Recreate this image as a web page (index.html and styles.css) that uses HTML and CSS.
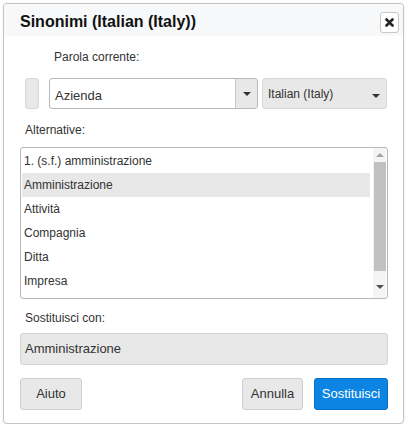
FILE: index.html
```html
<!DOCTYPE html>
<html>
<head>
<meta charset="utf-8">
<link rel="stylesheet" href="styles.css">
</head>
<body>
<div class="dialog">
  <div class="header">
    <div class="title">Sinonimi (Italian (Italy))</div>
    <div class="close">
      <svg width="9" height="9" viewBox="0 0 9 9"><path d="M1.5 1.5 L7.5 7.5 M7.5 1.5 L1.5 7.5" stroke="#222" stroke-width="2.6" stroke-linecap="round"/></svg>
    </div>
  </div>
  <div class="content">
    <div class="label label-word">Parola corrente:</div>
    <div class="word-row">
      <div class="small-btn"></div>
      <div class="combo">
        <div class="combo-text">Azienda</div>
        <div class="combo-drop"><span class="caret"></span></div>
      </div>
      <div class="select">
        <span class="select-text">Italian (Italy)</span>
        <span class="caret"></span>
      </div>
    </div>
    <div class="label label-alt">Alternative:</div>
    <div class="listbox">
      <div class="items">
        <div class="item">1. (s.f.) amministrazione</div>
        <div class="item selected">Amministrazione</div>
        <div class="item">Attività</div>
        <div class="item">Compagnia</div>
        <div class="item">Ditta</div>
        <div class="item">Impresa</div>
      </div>
      <div class="scrollbar">
        <span class="arrow-up"></span>
        <div class="thumb"></div>
        <span class="arrow-down"></span>
      </div>
    </div>
    <div class="label label-rep">Sostituisci con:</div>
    <div class="replace">Amministrazione</div>
    <div class="buttons">
      <div class="btn btn-help">Aiuto</div>
      <div class="spacer"></div>
      <div class="btn btn-cancel">Annulla</div>
      <div class="btn btn-primary">Sostituisci</div>
    </div>
  </div>
</div>
</body>
</html>
```
FILE: styles.css
```css
html, body {
  margin: 0;
  padding: 0;
  background: #ffffff;
}
body {
  font-family: "Liberation Sans", Arial, sans-serif;
  color: #333;
}
.dialog {
  position: relative;
  margin: 3px 0 0 3px;
  width: 399px;
  height: 419px;
  border: 1px solid #c4c4c4;
  border-radius: 4px;
  background: #fff;
  box-shadow: 0 0 2px rgba(0,0,0,0.12);
  overflow: hidden;
}
.header {
  height: 32px;
  background: #f6f8fa;
  display: flex;
  align-items: center;
  padding: 0 4px 0 16px;
}
.title {
  flex: 1;
  font-size: 16px;
  font-weight: bold;
  color: #111;
  margin-top: 3px;
}
.close {
  width: 17px;
  height: 19px;
  border: 1px solid #c8c8c8;
  border-radius: 3px;
  background: #fff;
  display: flex;
  align-items: center;
  justify-content: center;
  margin-top: 5px;
}
.content {
  padding: 0 15px 0 16px;
}
.label {
  font-size: 12px;
  line-height: 14px;
}
.label-word {
  margin: 14px 0 0 34px;
}
.word-row {
  display: flex;
  margin-top: 14px;
  height: 31px;
}
.small-btn {
  width: 12px;
  height: 29px;
  margin-left: 5px;
  background: #e8e8e8;
  border: 1px solid #d6d6d6;
  border-radius: 3px;
}
.combo {
  margin-left: 10px;
  width: 207px;
  height: 29px;
  border: 1px solid #b8b8b8;
  border-radius: 3px;
  display: flex;
  overflow: hidden;
  background: #fff;
}
.combo-text {
  flex: 1;
  font-size: 13px;
  line-height: 29px;
  padding-left: 5px;
  margin-top: 2px;
}
.combo-drop {
  width: 21px;
  background: #e8e8e8;
  border-left: 1px solid #c8c8c8;
  display: flex;
  align-items: center;
  justify-content: center;
}
.caret {
  display: inline-block;
  width: 0;
  height: 0;
  border-left: 4px solid transparent;
  border-right: 4px solid transparent;
  border-top: 4px solid #333;
}
.select {
  margin-left: 4px;
  height: 29px;
  background: #e8e8e8;
  border: 1px solid #d8d8d8;
  border-radius: 3px;
  display: flex;
  align-items: center;
  padding: 0 6px 0 5px;
  box-sizing: content-box;
  width: 112px;
}
.select-text {
  flex: 1;
  font-size: 12px;
  margin-top: 1px;
}
.select .caret {
  margin-top: 5px;
}
.label-alt {
  margin: 14px 0 0 5px;
}
.listbox {
  margin-top: 10px;
  height: 150px;
  border: 1px solid #b8b8b8;
  border-radius: 3px;
  display: flex;
  overflow: hidden;
}
.items {
  flex: 1;
  padding: 1px 3px 0 1px;
}
.item {
  height: 24px;
  line-height: 24px;
  font-size: 12px;
  padding-left: 2px;
  color: #333;
}
.item.selected {
  background: #e8e8e8;
}
.scrollbar {
  width: 13px;
  margin-right: 1px;
  background: #f4f4f4;
  display: flex;
  flex-direction: column;
  align-items: center;
}
.arrow-up {
  margin-top: 5px;
  width: 0;
  height: 0;
  border-left: 4px solid transparent;
  border-right: 4px solid transparent;
  border-bottom: 4px solid #a3a3a3;
}
.thumb {
  margin-top: 5px;
  width: 12px;
  height: 109px;
  background: #c1c1c1;
}
.arrow-down {
  margin-top: 14px;
  width: 0;
  height: 0;
  border-left: 4px solid transparent;
  border-right: 4px solid transparent;
  border-top: 4px solid #505050;
}
.label-rep {
  margin: 12px 0 0 5px;
}
.replace {
  margin-top: 8px;
  height: 30px;
  line-height: 30px;
  background: #e8e8e8;
  border: 1px solid #d4d4d4;
  border-radius: 3px;
  font-size: 13px;
  padding-left: 4px;
}
.buttons {
  display: flex;
  margin-top: 13px;
}
.spacer {
  flex: 1;
}
.btn {
  height: 30px;
  line-height: 30px;
  text-align: center;
  font-size: 13px;
  border-radius: 3px;
  background: #e8e8e8;
  border: 1px solid #cfcfcf;
  color: #333;
}
.btn-help {
  width: 60px;
}
.btn-cancel {
  width: 59px;
}
.btn-primary {
  width: 72px;
  margin-left: 11px;
  background: #0b84e3;
  border-color: #0a6fc0;
  color: #fff;
}
```
